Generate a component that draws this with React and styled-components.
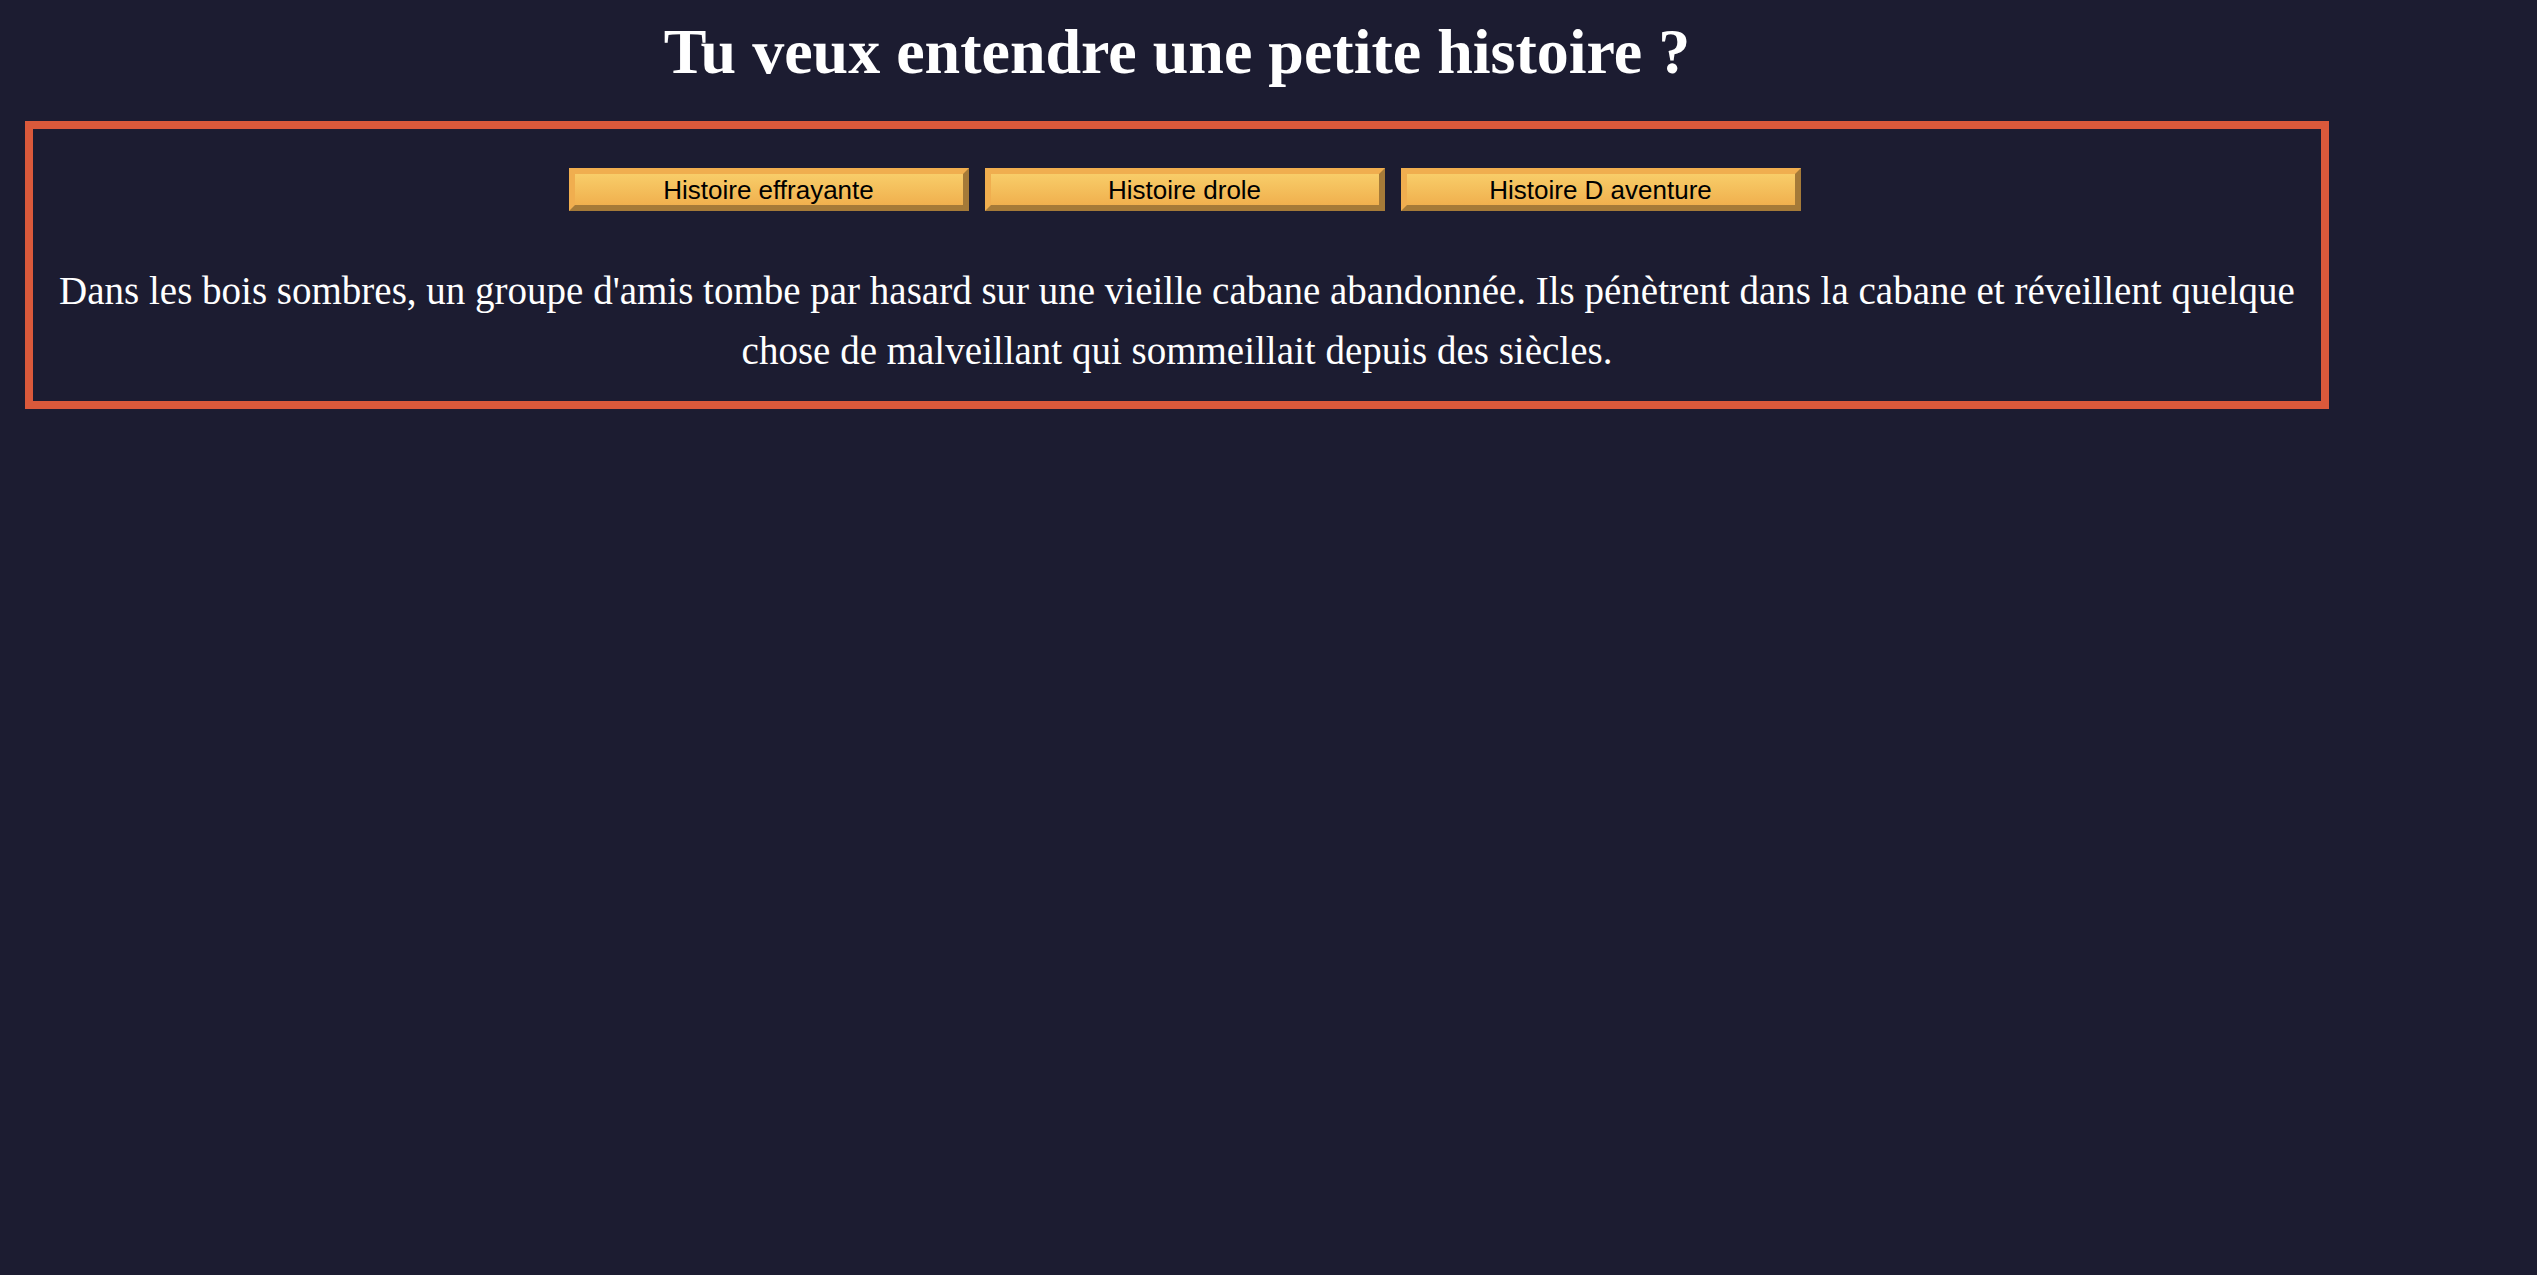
import React, { useState } from "react";
import styled, { createGlobalStyle } from "styled-components";

const stories = {
  effrayante:
    "Dans les bois sombres, un groupe d'amis tombe par hasard sur une vieille cabane abandonnée. Ils pénètrent dans la cabane et réveillent quelque chose de malveillant qui sommeillait depuis des siècles.",
  drole:
    "Un chat décide un matin de devenir chef cuisinier. Il renverse toute la farine, goûte chaque sauce et finit par s'endormir dans le panier à pain.",
  aventure:
    "Une jeune exploratrice trouve une carte au trésor dans le grenier de sa grand-mère et part à travers les montagnes pour découvrir ce qu'elle cache.",
};

const GlobalStyle = createGlobalStyle`
  html, body {
    margin: 0;
    padding: 0;
    background: #1c1c31;
    min-height: 100%;
  }
  body {
    font-family: "Liberation Serif", "Times New Roman", serif;
    color: #ffffff;
  }
`;

const Page = styled.main`
  width: 2304px;
  margin-left: 25px;
  padding-top: 15px;
`;

const Title = styled.h1`
  margin: 0 0 32px;
  font-size: 64px;
  font-weight: 700;
  line-height: normal;
  text-align: center;
  color: #ffffff;
`;

const StoryBox = styled.section`
  border: 8px solid #da593b;
  padding: 39px 20px 20px;
`;

const ButtonRow = styled.div`
  display: flex;
  justify-content: center;
  gap: 16px;
  padding-left: 15px;
`;

const StoryButton = styled.button`
  width: 400px;
  height: 43px;
  padding: 0;
  border: 6px solid;
  border-color: #f0ae4f #a57a38 #a57a38 #f0ae4f;
  background: linear-gradient(to bottom, #f8cd69, #f0b04e);
  font-family: "Liberation Sans", Arial, sans-serif;
  font-size: 26px;
  line-height: 1;
  color: #000;
  cursor: pointer;
`;

const StoryText = styled.p`
  margin: 50px 0 0;
  font-size: 39px;
  line-height: 60px;
  text-align: center;
`;

export default function App() {
  const [story, setStory] = useState("effrayante");

  return (
    <>
      <GlobalStyle />
      <Page>
        <Title>Tu veux entendre une petite histoire ?</Title>
        <StoryBox>
          <ButtonRow>
            <StoryButton onClick={() => setStory("effrayante")}>Histoire effrayante</StoryButton>
            <StoryButton onClick={() => setStory("drole")}>Histoire drole</StoryButton>
            <StoryButton onClick={() => setStory("aventure")}>Histoire D aventure</StoryButton>
          </ButtonRow>
          <StoryText>{stories[story]}</StoryText>
        </StoryBox>
      </Page>
    </>
  );
}
